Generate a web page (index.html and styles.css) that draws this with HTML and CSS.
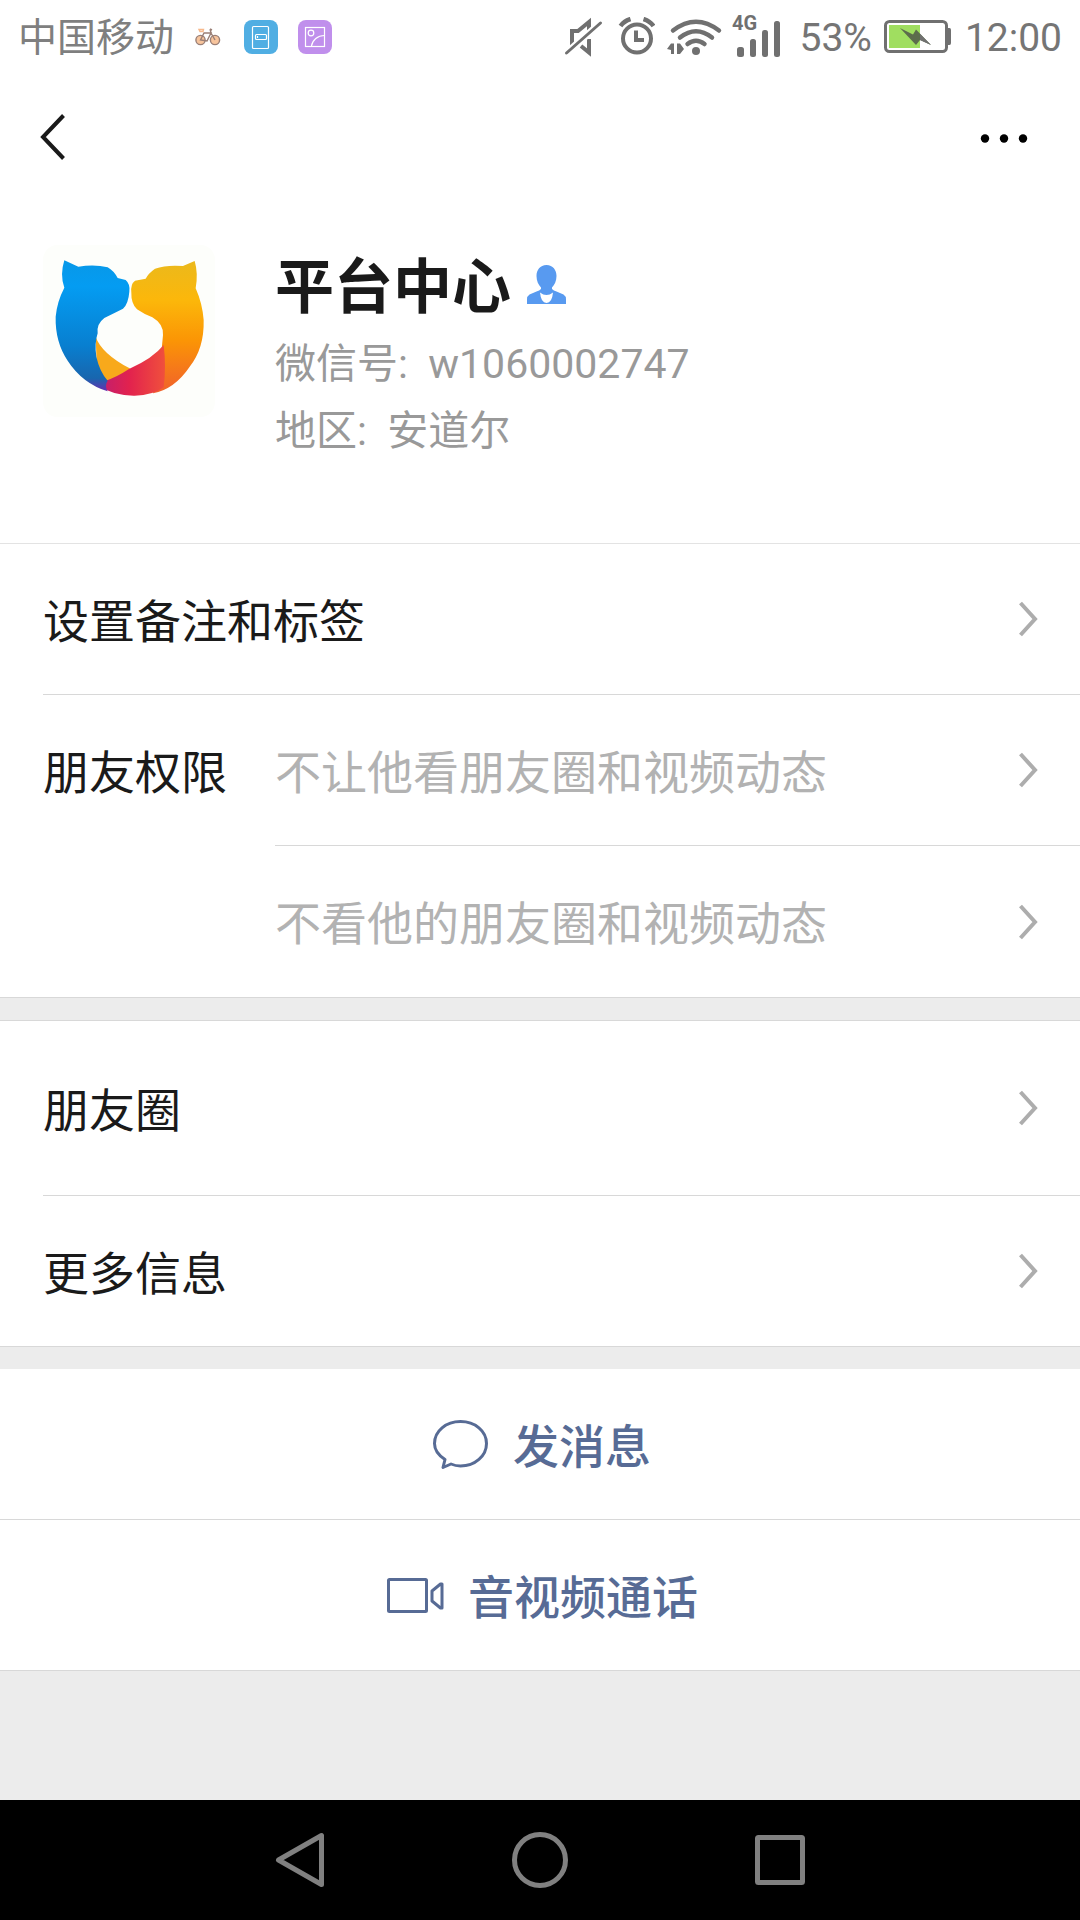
FILE: index.html
```html
<!DOCTYPE html>
<html lang="zh-CN">
<head>
<meta charset="utf-8">
<meta name="viewport" content="width=device-width, initial-scale=1">
<title>平台中心</title>
<link rel="stylesheet" href="styles.css">
</head>
<body>
<div class="status">
  <span class="carrier">中国移动</span>
  <svg class="bike" width="26" height="18" viewBox="0 0 26 18" fill="none" stroke="#9a7f76" stroke-width="1.4">
    <circle cx="5.500" cy="12" r="4.600" fill="#f7c49c"/><circle cx="20" cy="12" r="4.600" fill="#f7c49c"/>
    <path d="M5.500 12 9 5h7l-4 8zM16 5l4 7M15 1l1 4M15 1l2 1"/><path d="M4 1.500h4.500L8 3.500H5z" stroke="#f7b98c"/>
  </svg>
  <svg class="app" width="34" height="34" viewBox="0 0 34 34" fill="none" stroke="#fff" stroke-width="1.2">
    <rect width="34" height="34" rx="8" fill="#50aee3" stroke="none"/>
    <rect x="8.500" y="6.500" width="16" height="22" rx="1"/><rect x="11.500" y="14.500" width="11" height="5" rx="1"/><path d="M13.500 16v2"/>
  </svg>
  <svg class="app" width="34" height="34" viewBox="0 0 34 34" fill="none" stroke="#fff" stroke-width="1.2">
    <rect width="34" height="34" rx="8" fill="#c08fec" stroke="none"/>
    <rect x="7.500" y="7.500" width="19" height="19"/><circle cx="13" cy="13" r="2.800"/><path d="M13.500 26c1-6 6-10.500 13-10.500"/>
  </svg>
  <div class="indicators">
    <svg width="42" height="40" viewBox="0 0 42 40" fill="none" stroke="#707070" stroke-width="4">
      <path d="M8 28V14h6l11-9v11" /><path d="M17 29l8 6.500V22" /><path d="M2.500 36 35.500 7" stroke="#fff" stroke-width="7"/><path d="M2.500 36 36.500 6" stroke-width="3" stroke-linecap="round"/>
    </svg>
    <svg width="37" height="40" viewBox="0 0 37 40" fill="none" stroke="#707070" stroke-width="4">
      <circle cx="19" cy="21.500" r="14"/><path d="M18 13.500v9.500h8"/><path d="M2.500 9Q6 4 12.500 2M35.500 9Q32 4 25.500 2" stroke-width="4.500"/>
    </svg>
    <svg class="wifi" width="53" height="40" viewBox="0 0 53 40" fill="none" stroke="#707070" stroke-width="4.500" stroke-linecap="round">
      <path d="M6 13.500Q29 -4 52 13.500M13 20.500Q29 8 45 20.500M20.500 27Q29 20.500 37.500 27"/>
      <circle cx="29" cy="34" r="4" fill="#707070" stroke="none"/>
      <path d="M0 32 4 26.500h3V37H4v-4zM10 26.500h3L17 32l-4 5h-3z" fill="#707070" stroke="none"/>
    </svg>
    <svg width="55" height="58" viewBox="0 -6 55 58" fill="#707070">
      <text class="net" x="0" y="16">4G</text>
      <rect x="5" y="33" width="7" height="10" rx="2.500"/><rect x="18" y="25" width="6" height="18" rx="2.500"/><rect x="30" y="16" width="6" height="27" rx="2.500"/><rect x="42" y="7" width="6" height="36" rx="2.500"/>
    </svg>
    <span>53%</span>
    <svg width="69" height="34" viewBox="0 0 69 34">
      <rect x="1.500" y="1.500" width="61" height="30" rx="4" fill="#fff" stroke="#707070" stroke-width="3"/>
      <path d="M64 8h1.500q1.500 0 1.500 2v13q0 2-1.500 2H64z" fill="#707070"/><path d="M5 5h31v23H5z" fill="#a0de60"/>
      <path d="M16 8 29 14.500 32 9.500 47 25 36 20 32 25z" fill="#5c6c4c"/><path d="M36 14 47 25 36 20z" fill="#707070"/>
    </svg>
    <time>12:00</time>
  </div>
</div>

<header class="topbar">
  <button class="icon-button" aria-label="返回">
    <svg width="26" height="48" viewBox="0 0 26 48" fill="none" stroke="#1a1a1a" stroke-width="4"><path d="M23.500 2.500 3 24l20.500 21.500"/></svg>
  </button>
  <button class="icon-button" aria-label="更多">
    <svg width="48" height="12" viewBox="0 0 48 12"><circle cx="5" cy="7.500" r="4.200"/><circle cx="24" cy="7.500" r="4.200"/><circle cx="43" cy="7.500" r="4.200"/></svg>
  </button>
</header>

<main>
  <section class="profile">
    <svg class="avatar" viewBox="70 75 516 516" role="img" aria-label="头像">
      <defs>
        <linearGradient id="blue" x1="0" y1="0" x2="0" y2="1"><stop offset="0" stop-color="#0898e8"/><stop offset=".2" stop-color="#049cf2"/><stop offset=".65" stop-color="#087fd0"/><stop offset=".9" stop-color="#1866ae"/><stop offset="1" stop-color="#6a2cb0"/></linearGradient>
        <linearGradient id="gold" x1="0" y1="0" x2="0" y2="1"><stop offset="0" stop-color="#ebb91c"/><stop offset=".3" stop-color="#fcb70a"/><stop offset=".6" stop-color="#fb9505"/><stop offset="1" stop-color="#f0602c"/></linearGradient>
        <linearGradient id="red" x1="0" y1="0" x2="1" y2="0"><stop offset="0" stop-color="#7c2bb0"/><stop offset=".18" stop-color="#c81f68"/><stop offset=".5" stop-color="#e2224e"/><stop offset="1" stop-color="#f0503c"/></linearGradient>
      </defs>
      <rect x="70" y="75" width="516" height="516" rx="44" fill="#fdfefb"/>
      <path d="M525 123 490 138Q440 134 406 146 386 160 378 176L346 182Q332 192 335 218 334 250 352 268 372 282 398 292 432 312 430 345L426 388 400 520Q465 507 510 440 554 385 552 300 548 250 528 205 536 160 525 123z" fill="url(#gold)"/>
      <path d="M228 350Q245 400 330 445L350 470 262 490 232 460z" fill="#f8a91b"/>
      <path d="M432 375Q400 415 328 447 290 472 258 482L222 490Q280 528 345 527 400 526 432 502 440 440 432 375z" fill="url(#red)"/>
      <path d="M134 121 176 140Q225 132 264 142 282 152 294 174L318 180Q332 192 329 215 326 252 310 266 282 280 254 294 230 312 234 340 224 370 230 410 240 455 264 482 254 496 264 514 188 490 144 422 106 365 108 290 112 245 134 203 120 165 134 121z" fill="url(#blue)"/>
    </svg>
    <div class="details">
      <div class="name-line">
        <h1 class="name">平台中心</h1>
        <svg width="40" height="40" viewBox="0 0 40 40" fill="#589af0" role="img" aria-label="男">
          <path d="M19.500 0C26 0 29.500 5 29.500 11c0 5-2 9-4.500 11.500v1.500q1.500 1.500 4.500 2.500l7 3q2.500 1.500 2.500 5v4.500H0v-4.500q0-3.500 2.500-5l7-3q3-1 4.500-2.500v-1.500C11.500 20 9.500 16 9.500 11 9.500 5 13 0 19.500 0z"/>
          <path d="M13 27.500q6.500 5 13 0-1 10.500-6.500 10.500T13 27.500z" fill="#fff"/>
        </svg>
      </div>
      <p class="meta">微信号:&nbsp; w1060002747</p>
      <p class="meta">地区:&nbsp; 安道尔</p>
    </div>
  </section>

  <nav class="group">
    <a class="row" href="#remark"><span class="label">设置备注和标签</span><svg class="chevron" viewBox="0 0 20 36"><path d="M2.500 2 17 18 2.500 34"/></svg></a>
    <div class="permissions">
      <span class="label">朋友权限</span>
      <div class="options">
        <a class="row" href="#hide-mine"><span class="hint">不让他看朋友圈和视频动态</span><svg class="chevron" viewBox="0 0 20 36"><path d="M2.500 2 17 18 2.500 34"/></svg></a>
        <a class="row" href="#hide-theirs"><span class="hint">不看他的朋友圈和视频动态</span><svg class="chevron" viewBox="0 0 20 36"><path d="M2.500 2 17 18 2.500 34"/></svg></a>
      </div>
    </div>
  </nav>

  <nav class="group bordered">
    <a class="row tall" href="#moments"><span class="label">朋友圈</span><svg class="chevron" viewBox="0 0 20 36"><path d="M2.500 2 17 18 2.500 34"/></svg></a>
    <a class="row" href="#more"><span class="label">更多信息</span><svg class="chevron" viewBox="0 0 20 36"><path d="M2.500 2 17 18 2.500 34"/></svg></a>
  </nav>

  <section class="actions">
    <button class="action">
      <svg width="56" height="50" viewBox="0 0 56 50" fill="none" stroke="#576b95" stroke-width="3" stroke-linejoin="round"><path d="M12 40.500C5 36 1.500 30.500 1.500 24.500 1.500 12 13 2.500 27.500 2.500S53.500 12 53.500 24.500 42 47 27.500 47q-5 0-9.500-2L10 48.500z"/></svg>
      <span>发消息</span>
    </button>
    <button class="action">
      <svg width="58" height="38" viewBox="0 0 58 38" fill="none" stroke="#576b95" stroke-width="3" stroke-linejoin="round"><rect x="2.500" y="3.500" width="38" height="32" rx="1"/><path d="M46 15 54.500 8h1.500v24h-1.500l-8.500-7z"/></svg>
      <span>音视频通话</span>
    </button>
  </section>
</main>

<footer class="system">
  <button class="key" aria-label="后退"><svg width="60" height="60" viewBox="0 0 60 60"><path d="M8.500 30 51.500 5.500v49z"/></svg></button>
  <button class="key" aria-label="主屏幕"><svg width="60" height="60" viewBox="0 0 60 60"><circle cx="30" cy="30" r="25.500"/></svg></button>
  <button class="key" aria-label="最近任务"><svg width="60" height="60" viewBox="0 0 60 60"><rect x="7.500" y="7.500" width="45" height="45" rx="1"/></svg></button>
</footer>
</body>
</html>
```
FILE: styles.css
```css
* { box-sizing: border-box; }

body {
  margin: 0;
  min-height: 100vh;
  display: flex;
  flex-direction: column;
  background: #ececec;
  color: #1a1a1a;
  font-family: Roboto, "Noto Sans CJK SC", sans-serif;
  font-size: 46px;
  line-height: 60px;
}

svg { display: block; flex: none; }

button {
  border: 0;
  padding: 0;
  background: none;
  color: inherit;
  font: inherit;
}

a { color: inherit; text-decoration: none; }

.status {
  display: flex;
  align-items: center;
  height: 74px;
  padding: 0 18px;
  background: #fff;
  color: #757575;
  font-size: 39px;
}

.status span,
.status time { padding-top: 2px; }

.carrier { color: #7f7f7f; }
.bike { margin-left: 21px; }
.app { margin-left: 20px; }
.bike + .app { margin-left: 23px; }

.indicators {
  display: flex;
  align-items: center;
  gap: 12px;
  margin-left: auto;
}

.wifi { overflow: visible; }
.net { font-size: 20px; font-weight: 700; }

.topbar {
  display: flex;
  justify-content: space-between;
  align-items: center;
  height: 126px;
  padding: 0 52px 0 40px;
  background: #fff;
}

.profile {
  display: flex;
  align-items: flex-start;
  gap: 60px;
  padding: 45px 43px 78px;
  border-bottom: 1px solid #e3e3e3;
  background: #fff;
}

.avatar { width: 172px; height: 172px; }

.name-line {
  display: flex;
  align-items: center;
  gap: 16px;
  height: 80px;
  margin-bottom: 6px;
}

.name {
  margin: 0;
  padding-top: 6px;
  font-size: 59px;
  font-weight: 700;
}

.meta {
  margin: 0;
  color: #999;
  font-size: 41px;
  line-height: 67px;
}

.group { background: #fff; }

.bordered {
  margin-top: 22px;
  border-top: 1px solid #d8d8d8;
}

.row {
  display: flex;
  justify-content: space-between;
  align-items: center;
  height: 151px;
  margin-left: 43px;
  padding-right: 42px;
  border-bottom: 1px solid #d8d8d8;
}

.label,
.hint,
.action span { padding-top: 5px; }

.tall { height: 175px; }

.group > .row:last-child {
  margin-left: 0;
  padding-left: 43px;
}

.permissions {
  display: flex;
  padding-left: 43px;
  border-bottom: 1px solid #d8d8d8;
}

.permissions > .label {
  display: flex;
  align-items: center;
  width: 232px;
  height: 150px;
}

.options { flex: 1; }
.options .row { margin-left: 0; }
.options .row:last-child { border-bottom: 0; }
.hint { color: #b2b2b2; }

.chevron {
  width: 20px;
  height: 36px;
  fill: none;
  stroke: #adadad;
  stroke-width: 4;
}

.actions { margin-top: 22px; background: #fff; }

.action {
  display: flex;
  justify-content: center;
  align-items: center;
  gap: 24px;
  width: 100%;
  height: 151px;
  padding-left: 4px;
  border-bottom: 1px solid #d8d8d8;
  color: #576b95;
  font-weight: 500;
}

.system {
  display: flex;
  justify-content: center;
  height: 120px;
  margin-top: auto;
  background: #000;
}

.key {
  display: flex;
  justify-content: center;
  align-items: center;
  width: 240px;
  height: 120px;
}

.key svg {
  fill: none;
  stroke: #808080;
  stroke-width: 5;
  stroke-linejoin: round;
}
```
